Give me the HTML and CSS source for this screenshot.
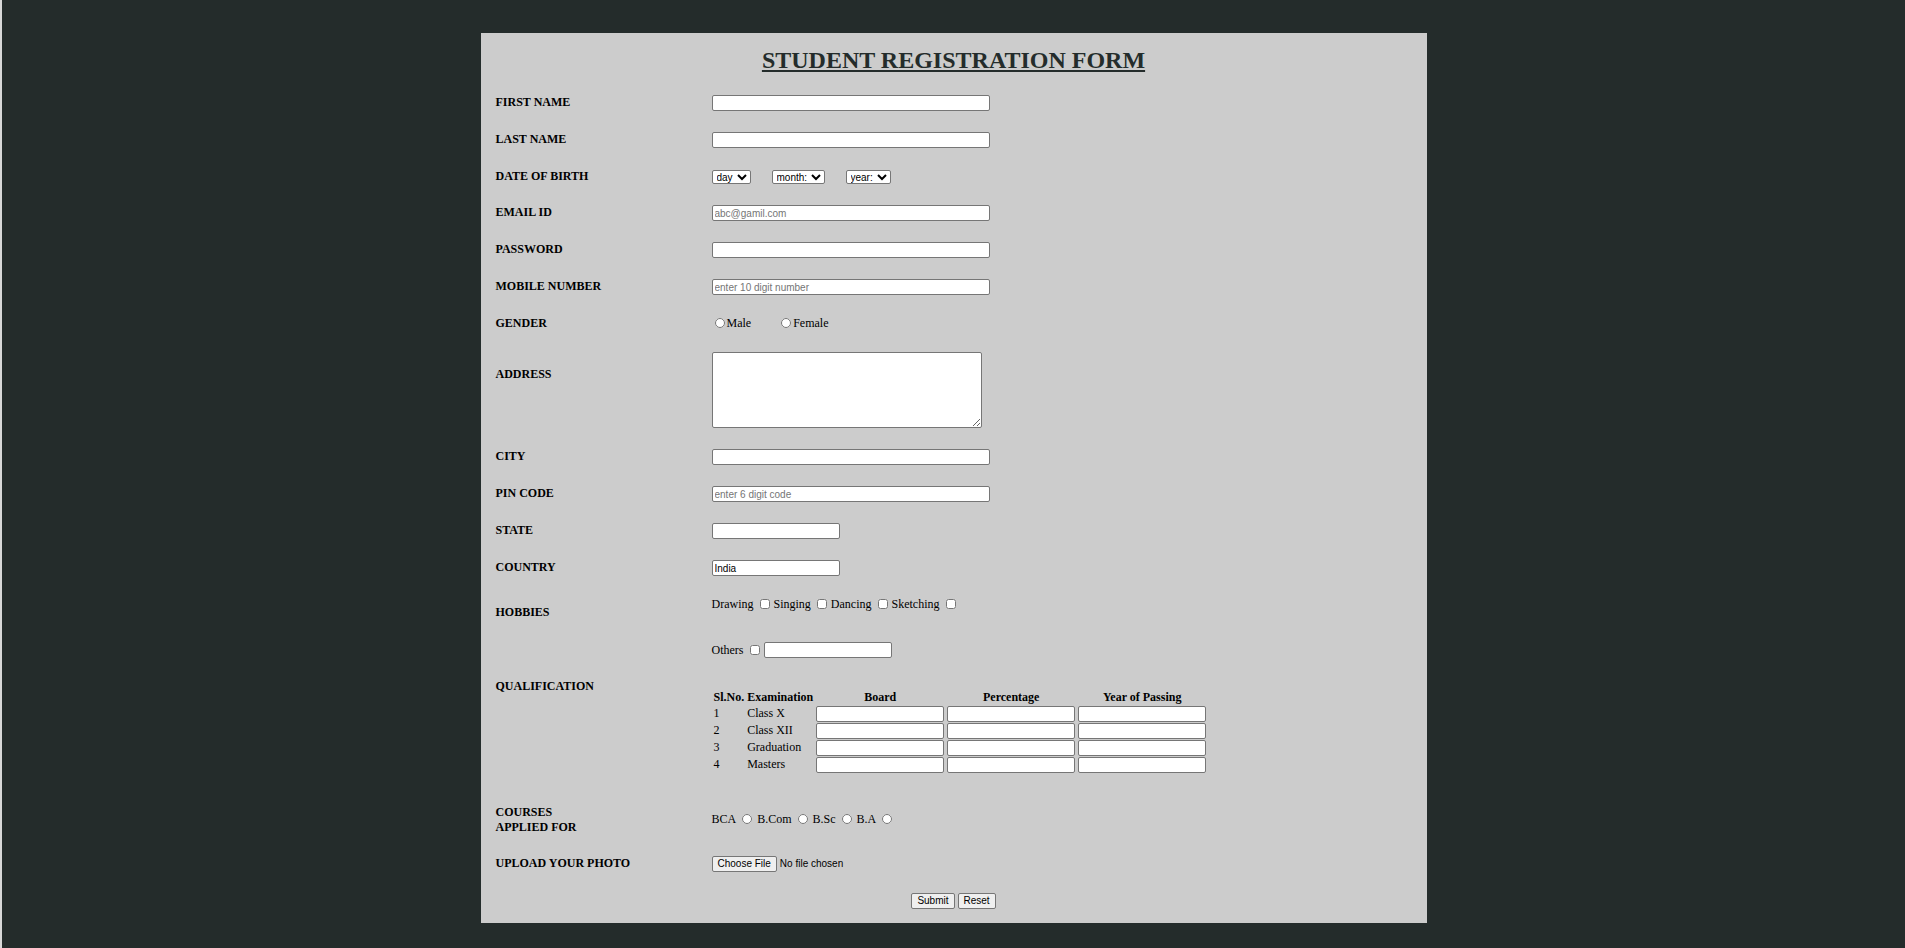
FILE: index.html
```html
<!DOCTYPE html>
<html lang="en">
<head>
<meta charset="utf-8">
<title>Student Registration Form</title>
<link rel="stylesheet" href="styles.css">
</head>
<body>
<form class="form">
  <h1 class="title">STUDENT REGISTRATION FORM</h1>

  <div class="row">
    <label class="name" for="first">FIRST NAME</label>
    <div class="field"><input class="text wide" type="text" id="first"></div>
  </div>
  <div class="row">
    <label class="name" for="last">LAST NAME</label>
    <div class="field"><input class="text wide" type="text" id="last"></div>
  </div>
  <div class="row">
    <label class="name" for="day">DATE OF BIRTH</label>
    <div class="field dates">
      <select class="pick day" id="day"><option>day</option></select>
      <select class="pick month" aria-label="Month"><option>month:</option></select>
      <select class="pick year" aria-label="Year"><option>year:</option></select>
    </div>
  </div>
  <div class="row">
    <label class="name" for="email">EMAIL ID</label>
    <div class="field"><input class="text wide" type="email" id="email" placeholder="abc@gamil.com"></div>
  </div>
  <div class="row">
    <label class="name" for="password">PASSWORD</label>
    <div class="field"><input class="text wide" type="password" id="password"></div>
  </div>
  <div class="row">
    <label class="name" for="mobile">MOBILE NUMBER</label>
    <div class="field"><input class="text wide" type="text" id="mobile" placeholder="enter 10 digit number"></div>
  </div>
  <div class="row">
    <span class="name" id="gender">GENDER</span>
    <div class="field genders" role="radiogroup" aria-labelledby="gender">
      <label class="gender"><input class="tick" type="radio" name="gender">Male</label>
      <label class="gender"><input class="tick" type="radio" name="gender">Female</label>
    </div>
  </div>
  <div class="row">
    <label class="name name-address" for="address">ADDRESS</label>
    <div class="field"><textarea class="address" id="address"></textarea></div>
  </div>
  <div class="row">
    <label class="name" for="city">CITY</label>
    <div class="field"><input class="text wide" type="text" id="city"></div>
  </div>
  <div class="row">
    <label class="name" for="pin">PIN CODE</label>
    <div class="field"><input class="text wide" type="text" id="pin" placeholder="enter 6 digit code"></div>
  </div>
  <div class="row">
    <label class="name" for="state">STATE</label>
    <div class="field"><input class="text" type="text" id="state"></div>
  </div>
  <div class="row">
    <label class="name" for="country">COUNTRY</label>
    <div class="field"><input class="text" type="text" id="country" value="India"></div>
  </div>
  <div class="row">
    <span class="name name-hobbies">HOBBIES</span>
    <div class="field hobbies">
      <div class="choices">
        <label class="choice">Drawing <input class="tick" type="checkbox"></label>
        <label class="choice">Singing <input class="tick" type="checkbox"></label>
        <label class="choice">Dancing <input class="tick" type="checkbox"></label>
        <label class="choice">Sketching <input class="tick" type="checkbox"></label>
      </div>
      <div class="choices">
        <label class="choice">Others <input class="tick" type="checkbox"></label>
        <input class="text" type="text" aria-label="Other hobbies">
      </div>
    </div>
  </div>
  <div class="row row-qualification">
    <span class="name">QUALIFICATION</span>
    <div class="field">
      <table class="exams">
        <thead>
          <tr><th>Sl.No.</th><th>Examination</th><th>Board</th><th>Percentage</th><th>Year of Passing</th></tr>
        </thead>
        <tbody>
          <tr><td>1</td><td>Class X</td><td><input class="text" aria-label="Class X board"></td><td><input class="text" aria-label="Class X percentage"></td><td><input class="text" aria-label="Class X year"></td></tr>
          <tr><td>2</td><td>Class XII</td><td><input class="text" aria-label="Class XII board"></td><td><input class="text" aria-label="Class XII percentage"></td><td><input class="text" aria-label="Class XII year"></td></tr>
          <tr><td>3</td><td>Graduation</td><td><input class="text" aria-label="Graduation board"></td><td><input class="text" aria-label="Graduation percentage"></td><td><input class="text" aria-label="Graduation year"></td></tr>
          <tr><td>4</td><td>Masters</td><td><input class="text" aria-label="Masters board"></td><td><input class="text" aria-label="Masters percentage"></td><td><input class="text" aria-label="Masters year"></td></tr>
        </tbody>
      </table>
    </div>
  </div>
  <div class="row row-courses">
    <span class="name" id="courses">COURSES<br>APPLIED FOR</span>
    <div class="field choices courses" role="radiogroup" aria-labelledby="courses">
      <label class="choice">BCA <input class="tick" type="radio" name="course"></label>
      <label class="choice">B.Com <input class="tick" type="radio" name="course"></label>
      <label class="choice">B.Sc <input class="tick" type="radio" name="course"></label>
      <label class="choice">B.A <input class="tick" type="radio" name="course"></label>
    </div>
  </div>
  <div class="row">
    <label class="name" for="photo">UPLOAD YOUR PHOTO</label>
    <div class="field"><input class="file" type="file" id="photo"></div>
  </div>
  <div class="actions">
    <button class="button" type="submit">Submit</button>
    <button class="button" type="reset">Reset</button>
  </div>
</form>
</body>
</html>
```
FILE: styles.css
```css
* {
  box-sizing: border-box;
}

body {
  margin: 0;
  min-height: 100vh;
  padding: 33px 0 25px;
  border-left: 2px solid #d8d8d8;
  background: #242c2b;
  color: #000;
  font: 12px/14px "Liberation Serif", "Times New Roman", serif;
}

.form {
  max-width: 946px;
  margin: 0 auto;
  padding: 14px 15px 14px;
  background: #ccc;
}

.title {
  margin: 0 0 10px;
  color: #242c2b;
  font-size: 24px;
  line-height: 27px;
  text-align: center;
  text-decoration: underline;
}

.row {
  display: grid;
  grid-template-columns: 216px 1fr;
  align-items: start;
  padding: 11px 0 10px;
}

.name {
  font-weight: bold;
}

.name-address {
  padding-top: 15px;
}

.name-hobbies {
  padding-top: 8px;
}

.field {
  display: flex;
}

.text,
.address {
  display: block;
  width: 128px;
  height: 16px;
  margin: 0;
  padding: 1px 2px;
  border: 1px solid #767676;
  border-radius: 2px;
  background: #fff;
  color: #000;
  font: 10px/12px "Liberation Sans", Arial, sans-serif;
}

.text::placeholder {
  color: #757575;
}

.wide {
  width: 278px;
}

.address {
  width: 270px;
  height: 76px;
}

.dates {
  gap: 21px;
  padding-top: 1px;
}

.pick {
  height: 14px;
  margin: 0;
  padding: 0;
  border: 1px solid #767676;
  border-radius: 2px;
  background: #fff;
  color: #000;
  font: 10px/12px "Liberation Sans", Arial, sans-serif;
}

.day {
  width: 39px;
}

.month {
  width: 53px;
}

.year {
  width: 45px;
}

.tick {
  width: 10px;
  height: 10px;
  margin: 0;
}

.genders {
  gap: 30px;
  padding: 0 3px 1px;
}

.gender {
  display: flex;
  align-items: center;
  gap: 2px;
}

.hobbies {
  flex-direction: column;
  gap: 31px;
}

.choices {
  display: flex;
  align-items: center;
  gap: 4px;
}

.choice {
  display: flex;
  align-items: center;
  gap: 6px;
}

.row-qualification {
  padding-bottom: 20px;
}

.exams {
  margin-top: 11px;
  border-collapse: collapse;
}

.exams th {
  padding: 0 1px 2px 2px;
}

.exams td {
  padding: 0 1px 1px 2px;
  vertical-align: top;
}

.row-courses {
  align-items: center;
  line-height: 15px;
}

.courses {
  gap: 5px;
  line-height: 14px;
  padding-bottom: 2px;
}

.file {
  height: 16px;
  font: 10px/12px "Liberation Sans", Arial, sans-serif;
}

.button,
.file::file-selector-button {
  height: 16px;
  margin: 0;
  padding: 0 5px;
  border: 1px solid #767676;
  border-radius: 2px;
  background: #efefef;
  color: #000;
  font: 10px/12px "Liberation Sans", Arial, sans-serif;
}

.file::file-selector-button {
  margin-right: 3px;
}

.actions {
  display: flex;
  justify-content: center;
  gap: 3px;
  padding-top: 11px;
}
```
